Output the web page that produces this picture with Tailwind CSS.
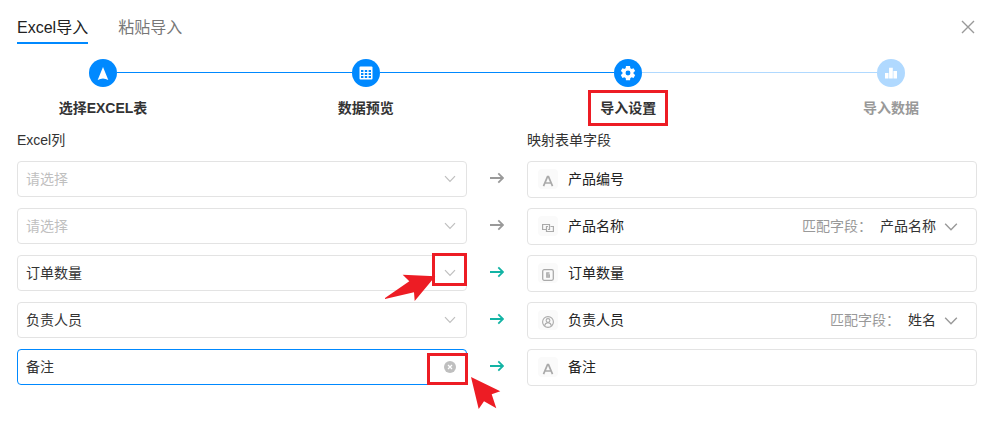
<!DOCTYPE html>
<html lang="zh-CN">
<head>
  <meta charset="UTF-8" />
  <meta name="viewport" content="width=device-width, initial-scale=1.0"/>
  <title>Excel导入</title>
  <script src="https://cdn.jsdelivr.net/npm/@tailwindcss/browser@4"></script>
</head>

<body class="bg-white font-['Liberation_Sans','Noto_Sans_CJK_SC',sans-serif] text-sm leading-5 text-[#333] pl-[17px] pr-[18px] pb-8">
  <!-- Shared icons -->
  <svg class="hidden">
    <symbol id="chevron" viewBox="0 0 12 12" fill="none" stroke="currentColor" stroke-width="1.2"><path d="M1 3.2 6 8.4 11 3.2"/></symbol>
    <symbol id="arrow" viewBox="0 0 14 12" fill="none" stroke="currentColor" stroke-width="1.8"><path d="M0 6H13M8.300 1.300 13 6 8.300 10.700"/></symbol>
    <symbol id="letter" viewBox="0 0 12 12" fill="none" stroke="currentColor" stroke-width="1.7"><path d="M1.500 11.200 5.500 1.600H6.500L10.500 11.200M3 8H9"/></symbol>
  </svg>

  <!-- Tabs -->
  <header class="flex items-start justify-between pt-4">
    <nav class="flex gap-[30px] text-base">
      <button class="pb-0.5 border-b-2 border-[#0089ff] text-[#222]">Excel导入</button>
      <button class="pb-0.5 border-b-2 border-transparent text-[#777]">粘贴导入</button>
    </nav>
    <button aria-label="关闭" class="mt-1 mr-0.5 text-[#999]">
      <svg class="block size-[14px]" viewBox="0 0 14 14" fill="none" stroke="currentColor" stroke-width="1.4"><path d="M1 1 13 13M13 1 1 13"/></svg>
    </button>
  </header>

  <!-- Steps -->
  <ol class="flex items-start mt-[15px] px-[72px] font-bold whitespace-nowrap">
    <li class="w-7 flex flex-col items-center">
      <span class="size-7 rounded-full bg-[#0089ff] text-white flex items-center justify-center">
        <svg class="size-[14px]" viewBox="0 0 14 14" fill="currentColor"><path d="M7 1 12.300 14Q9.600 12.400 7 12.400T1.700 14Z"/></svg>
      </span>
      <span class="mt-[11px]">选择EXCEL表</span>
    </li>
    <li aria-hidden="true" class="flex-1 h-px mt-[13px] bg-[#0089ff]"></li>
    <li class="w-7 flex flex-col items-center">
      <span class="size-7 rounded-full bg-[#0089ff] text-white flex items-center justify-center">
        <svg class="size-[14px]" viewBox="0 0 14 14"><rect x=".5" y=".5" width="13" height="13" rx="1" fill="#fff"/><path d="M2 4h2.400v2H2zM5.800 4h2.400v2H5.800zM9.600 4H12v2H9.600zM2 7h2.400v2H2zM5.800 7h2.400v2H5.800zM9.600 7H12v2H9.600zM2 10h2.400v2H2zM5.800 10h2.400v2H5.800zM9.600 10H12v2H9.600z" fill="#0089ff"/></svg>
      </span>
      <span class="mt-[11px]">数据预览</span>
    </li>
    <li aria-hidden="true" class="flex-1 h-px mt-[13px] bg-[#0089ff]"></li>
    <li class="w-7 flex flex-col items-center">
      <span class="size-7 rounded-full bg-[#0089ff] text-white flex items-center justify-center">
        <svg class="size-[18px]" viewBox="0 0 24 24" fill="currentColor"><path d="M19.4 13a7.5 7.5 0 0 0 0-2l2.2-1.7-2.2-3.8-2.6 1a8 8 0 0 0-1.7-1L14.7 2.500H9.300L8.900 5.500a8 8 0 0 0-1.700 1l-2.600-1-2.200 3.800L4.600 11a7.500 7.500 0 0 0 0 2l-2.200 1.700 2.200 3.800 2.600-1a8 8 0 0 0 1.700 1l.4 3h5.400l.4-3a8 8 0 0 0 1.700-1l2.600 1 2.200-3.800zM12 15.300a3.300 3.300 0 1 1 0-6.600 3.300 3.300 0 0 1 0 6.600z"/></svg>
      </span>
      <span class="relative mt-[11px]">导入设置
        <span class="absolute -inset-x-3 -top-2 -bottom-2 border-3 border-[#ed1c24]"></span>
      </span>
    </li>
    <li aria-hidden="true" class="flex-1 h-px mt-[13px] bg-[#b0d9ff]"></li>
    <li class="w-7 flex flex-col items-center">
      <span class="size-7 rounded-full bg-[#b0d9ff] text-white flex items-center justify-center">
        <svg class="size-3" viewBox="0 0 12 12" fill="currentColor"><path d="M0 6h3.500v5.500H0zM4.100 .8h3.700v10.700H4.100zM8.400 4H12v7.500H8.400z"/></svg>
      </span>
      <span class="mt-[11px] text-[#999]">导入数据</span>
    </li>
  </ol>

  <!-- Field mapping -->
  <main class="mt-3">
    <div class="grid grid-cols-[1fr_60px_1fr] mb-[11px]">
      <h2>Excel列</h2>
      <h2 class="col-start-3">映射表单字段</h2>
    </div>

    <div class="flex flex-col gap-2.5">
      <div class="grid grid-cols-[1fr_60px_1fr] items-start">
        <div class="relative">
          <select aria-label="产品编号对应的Excel列" class="block w-full h-9 px-2 appearance-none rounded-sm border border-[#e3e3e3] text-[#bfbfbf]"><option>请选择</option></select>
          <svg class="absolute right-[11px] top-3 size-3 text-[#bfbfbf] pointer-events-none"><use href="#chevron"/></svg>
        </div>
        <svg class="w-[14px] h-3 mt-[11px] justify-self-center text-[#999]"><use href="#arrow"/></svg>
        <div class="flex items-center gap-2.5 h-[37px] px-2.5 pb-0.5 rounded-sm border border-[#e3e3e3]">
          <span class="size-5 pt-1 rounded-sm bg-[#fafafa] text-[#aaa] flex items-center justify-center"><svg class="size-3"><use href="#letter"/></svg></span>
          <span class="text-[#222]">产品编号</span>
        </div>
      </div>

      <div class="grid grid-cols-[1fr_60px_1fr] items-start">
        <div class="relative">
          <select aria-label="产品名称对应的Excel列" class="block w-full h-9 px-2 appearance-none rounded-sm border border-[#e3e3e3] text-[#bfbfbf]"><option>请选择</option></select>
          <svg class="absolute right-[11px] top-3 size-3 text-[#bfbfbf] pointer-events-none"><use href="#chevron"/></svg>
        </div>
        <svg class="w-[14px] h-3 mt-[11px] justify-self-center text-[#999]"><use href="#arrow"/></svg>
        <div class="flex items-center gap-2.5 h-[37px] px-2.5 pb-0.5 rounded-sm border border-[#e3e3e3]">
          <span class="size-5 pt-1 rounded-sm bg-[#fafafa] text-[#aaa] flex items-center justify-center">
            <svg class="size-3" viewBox="0 0 12 12" fill="none" stroke="currentColor" stroke-width="1.200"><path d="M4 7.500H.6V2.500H7.500V7.500H6M8.500 4.500h2.900V9.500H4.500V4.500H6"/></svg>
          </span>
          <span class="text-[#222]">产品名称</span>
          <div class="relative ml-auto mr-2 flex items-center gap-2">
            <label for="matchProduct" class="text-[#999]">匹配字段：</label>
            <select id="matchProduct" class="appearance-none pr-[22px] text-[#333]"><option>产品名称</option></select>
            <svg class="absolute right-0 top-1 size-[14px] text-[#999] pointer-events-none"><use href="#chevron"/></svg>
          </div>
        </div>
      </div>

      <div class="grid grid-cols-[1fr_60px_1fr] items-start">
        <div class="relative">
          <select aria-label="订单数量对应的Excel列" class="block w-full h-9 px-2 appearance-none rounded-sm border border-[#e3e3e3]"><option>订单数量</option></select>
          <svg class="absolute right-[11px] top-3 size-3 text-[#bfbfbf] pointer-events-none"><use href="#chevron"/></svg>
          <span class="absolute right-0 -top-0.5 w-[35px] h-[33px] border-3 border-[#ed1c24] pointer-events-none"></span>
          <svg class="absolute right-[31px] top-[19px] w-[51px] h-7 pointer-events-none" viewBox="0 0 51 28" fill="#ed1c24"><path d="M0 24 24.300 7.300 17.700.7 50.300 2.300 29.700 27 29 18.300 0 25z"/></svg>
        </div>
        <svg class="w-[14px] h-3 mt-[11px] justify-self-center text-[#12b3a4]"><use href="#arrow"/></svg>
        <div class="flex items-center gap-2.5 h-[37px] px-2.5 pb-0.5 rounded-sm border border-[#e3e3e3]">
          <span class="size-5 pt-1 rounded-sm bg-[#fafafa] text-[#aaa] flex items-center justify-center">
            <svg class="size-3" viewBox="0 0 12 12" fill="none" stroke="currentColor" stroke-width="1.300"><rect x=".7" y=".7" width="10.600" height="10.600" rx="1.500"/><path d="M7.500 4H4.800V8H7.300V6H5"/></svg>
          </span>
          <span class="text-[#222]">订单数量</span>
        </div>
      </div>

      <div class="grid grid-cols-[1fr_60px_1fr] items-start">
        <div class="relative">
          <select aria-label="负责人员对应的Excel列" class="block w-full h-9 px-2 appearance-none rounded-sm border border-[#e3e3e3]"><option>负责人员</option></select>
          <svg class="absolute right-[11px] top-3 size-3 text-[#bfbfbf] pointer-events-none"><use href="#chevron"/></svg>
        </div>
        <svg class="w-[14px] h-3 mt-[11px] justify-self-center text-[#12b3a4]"><use href="#arrow"/></svg>
        <div class="flex items-center gap-2.5 h-[37px] px-2.5 pb-0.5 rounded-sm border border-[#e3e3e3]">
          <span class="size-5 pt-1 rounded-sm bg-[#fafafa] text-[#aaa] flex items-center justify-center">
            <svg class="size-3" viewBox="0 0 12 12" fill="none" stroke="currentColor" stroke-width="1.100"><circle cx="6" cy="6" r="5.400"/><circle cx="6" cy="4.500" r="1.900"/><path d="M2.600 9.800C3 7.600 4.500 6.800 6 6.800S9 7.600 9.400 9.800"/></svg>
          </span>
          <span class="text-[#222]">负责人员</span>
          <div class="relative ml-auto mr-2 flex items-center gap-2">
            <label for="matchPerson" class="text-[#999]">匹配字段：</label>
            <select id="matchPerson" class="appearance-none pr-[22px] text-[#333]"><option>姓名</option></select>
            <svg class="absolute right-0 top-1 size-[14px] text-[#999] pointer-events-none"><use href="#chevron"/></svg>
          </div>
        </div>
      </div>

      <div class="grid grid-cols-[1fr_60px_1fr] items-start">
        <div class="relative">
          <select aria-label="备注对应的Excel列" class="block w-full h-9 px-2 appearance-none rounded-sm border border-[#0089ff]"><option>备注</option></select>
          <button aria-label="清除" class="absolute right-[11px] top-3">
            <svg class="block size-3" viewBox="0 0 12 12"><circle cx="6" cy="6" r="6" fill="#bfbfbf"/><path d="M4 4 8 8M8 4 4 8" stroke="#fff" stroke-width="1.200"/></svg>
          </button>
          <span class="absolute -right-px top-1 w-[41px] h-8 border-3 border-[#ed1c24] pointer-events-none"></span>
          <svg class="absolute -right-[34px] top-7 w-[30px] h-[33px] pointer-events-none" viewBox="0 0 30 33" fill="#ed1c24"><path d="M0 0 29.300 14.300 20.700 17.300 25.300 31.300 13 24.300 7.700 32z"/></svg>
        </div>
        <svg class="w-[14px] h-3 mt-[11px] justify-self-center text-[#12b3a4]"><use href="#arrow"/></svg>
        <div class="flex items-center gap-2.5 h-[37px] px-2.5 pb-0.5 rounded-sm border border-[#e3e3e3]">
          <span class="size-5 pt-1 rounded-sm bg-[#fafafa] text-[#aaa] flex items-center justify-center"><svg class="size-3"><use href="#letter"/></svg></span>
          <span class="text-[#222]">备注</span>
        </div>
      </div>
    </div>
  </main>
</body>
</html>
